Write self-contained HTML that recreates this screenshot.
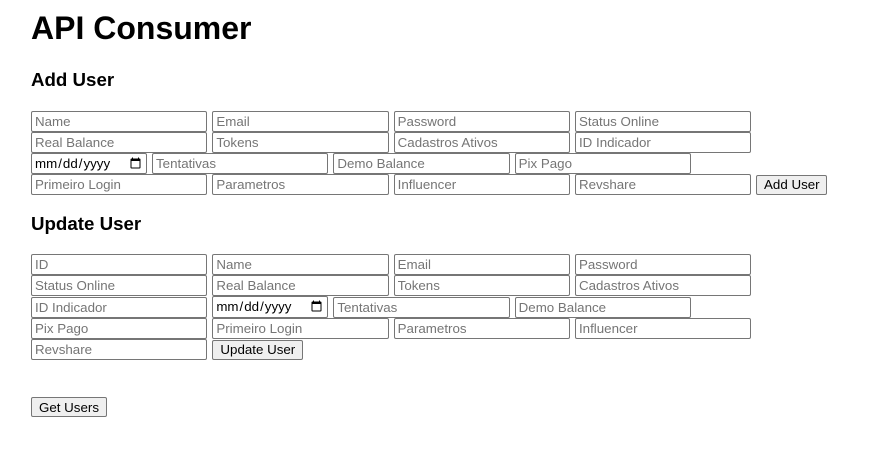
<!DOCTYPE html>
<html><head><style>
body{margin:0;font-family:"Liberation Sans",Arial,sans-serif;background:#fff;color:#000}
.w{padding-left:31px;width:820px}
h1{font-size:32px;margin:10px 0 0;line-height:37px}
h3{font-size:18.72px;margin:0;line-height:22px}
.f{display:flex;flex-wrap:wrap;column-gap:5px;align-items:flex-end}
input{box-sizing:border-box;width:176.33px;height:21px;border:1px solid #767676;border-radius:2px;padding:1px 3px;font:13.33px "Liberation Sans",Arial,sans-serif;margin:0;color:#000}
input::placeholder{color:#757575}
input[type=date]{width:116px;padding:1px 2px}
.u input[type=date]{height:22px}
button{box-sizing:border-box;height:20px;background:#efefef;border:1px solid #767676;border-radius:2px;font:13.33px "Liberation Sans",Arial,sans-serif;padding:1px 6px;margin:0;color:#000}
</style></head><body><div class="w">
<h1>API Consumer</h1>
<h3 style="margin-top:22px">Add User</h3>
<div class="f" style="margin-top:20px">
<input placeholder="Name"><input placeholder="Email"><input placeholder="Password"><input placeholder="Status Online">
<input placeholder="Real Balance"><input placeholder="Tokens"><input placeholder="Cadastros Ativos"><input placeholder="ID Indicador">
<input type="date"><input placeholder="Tentativas"><input placeholder="Demo Balance"><input placeholder="Pix Pago">
<input placeholder="Primeiro Login"><input placeholder="Parametros"><input placeholder="Influencer"><input placeholder="Revshare"><button style="width:71px;margin-bottom:0.5px">Add User</button>
</div>
<h3 style="margin-top:18px">Update User</h3>
<div class="f u" style="margin-top:19px">
<input placeholder="ID"><input placeholder="Name"><input placeholder="Email"><input placeholder="Password">
<input placeholder="Status Online"><input placeholder="Real Balance"><input placeholder="Tokens"><input placeholder="Cadastros Ativos">
<input placeholder="ID Indicador"><input type="date"><input placeholder="Tentativas"><input placeholder="Demo Balance">
<input placeholder="Pix Pago"><input placeholder="Primeiro Login"><input placeholder="Parametros"><input placeholder="Influencer">
<input placeholder="Revshare"><button style="width:91px;margin-bottom:0.5px">Update User</button>
</div>
<div style="margin-top:37px"><button style="width:76px">Get Users</button></div>
</div></body></html>
